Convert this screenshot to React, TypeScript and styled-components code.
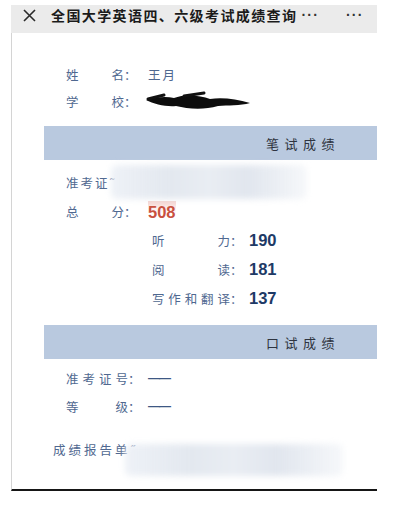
import React from "react";
import styled, { createGlobalStyle } from "styled-components";

const Global = createGlobalStyle`
  html, body { margin: 0; padding: 0; background: #ffffff; }
  body { font-family: "Noto Sans CJK SC", "Noto Sans", sans-serif; }
`;

const Page = styled.div`
  width: 405px;
  height: 510px;
  padding: 5px 0 0 11px;
  box-sizing: border-box;
  background: #fff;
`;

const Header = styled.div`
  width: 366px;
  height: 28px;
  box-sizing: border-box;
  background: #ebebeb;
  display: flex;
  align-items: flex-start;
  padding: 1px 0 0 12px;
`;

const CloseIcon = styled.svg`
  width: 13px;
  height: 13px;
  margin-top: 3px;
  flex: none;
`;

const Title = styled.div`
  margin-left: 15px;
  font-size: 14px;
  line-height: 19px;
  font-weight: 700;
  letter-spacing: 1.4px;
  color: #1b1b1b;
  white-space: nowrap;
  font-family: "Noto Sans CJK SC", sans-serif;
`;

const Dots = styled.span<{ $ml: number }>`
  margin-left: ${(p) => p.$ml}px;
  font-size: 14px;
  line-height: 19px;
  font-weight: 700;
  letter-spacing: 1.2px;
  color: #333;
  font-family: "Liberation Sans", sans-serif;
`;

const Body = styled.div`
  width: 366px;
  height: 458px;
  box-sizing: border-box;
  border-left: 1px solid #d4d4d4;
  border-bottom: 2px solid #161616;
  padding: 31px 0 0 54px;
  display: flex;
  flex-direction: column;
`;

const Row = styled.div<{ $mt?: number; $indent?: number }>`
  display: flex;
  align-items: center;
  height: 20px;
  margin-top: ${(p) => p.$mt ?? 0}px;
  margin-left: ${(p) => p.$indent ?? 0}px;
  font-size: 12.5px;
  color: #4f6890;
  white-space: nowrap;
`;

const Label = styled.span<{ $w: number }>`
  display: inline-flex;
  justify-content: space-between;
  width: ${(p) => p.$w}px;
  flex: none;
`;

const Colon = styled.span<{ $w: number }>`
  width: ${(p) => p.$w}px;
  flex: none;
`;

const Value = styled.span`
  letter-spacing: 2px;
`;

const Dash = styled.span`
  font-family: "Liberation Sans", sans-serif;
  font-weight: 700;
  font-size: 12px;
  letter-spacing: -1px;
  color: #3e5884;
`;

const Num = styled.span<{ $red?: boolean }>`
  font-family: "Liberation Sans", Arial, sans-serif;
  font-weight: 700;
  font-size: 16.5px;
  color: ${(p) => (p.$red ? "#c9513f" : "#1e3a66")};
  ${(p) =>
    p.$red
      ? "background: linear-gradient(to bottom, rgba(232,150,140,0.45) 0%, rgba(232,150,140,0.15) 35%, rgba(255,255,255,0) 60%); padding-top: 2px;"
      : ""}
`;

const Bar = styled.div<{ $mt: number }>`
  margin: ${(p) => p.$mt}px 0 0 -22px;
  width: 333px;
  height: 34px;
  flex: none;
  background: #b9c9df;
  display: flex;
  align-items: center;
  justify-content: flex-end;
  padding-right: 37px;
  box-sizing: border-box;
  font-size: 13px;
  letter-spacing: 5.5px;
  color: #2e3440;
`;

const Blur = styled.span<{ $w: number; $h: number; $ml: number; $mt?: number }>`
  display: inline-block;
  flex: none;
  width: ${(p) => p.$w}px;
  height: ${(p) => p.$h}px;
  margin-left: ${(p) => p.$ml}px;
  margin-top: ${(p) => p.$mt ?? 0}px;
  background:
    linear-gradient(90deg, rgba(236,240,246,0.9) 0%, #e3e8ef 30%, #e9edf3 50%, #e1e6ee 70%, rgba(240,243,247,0.6) 100%);
  filter: blur(3px);
  border-radius: 6px;
`;

const Scribble = styled.svg`
  width: 110px;
  height: 20px;
  margin-left: -4px;
  flex: none;
`;

const ReportRow = styled.div`
  display: flex;
  align-items: flex-start;
  margin: 24px 0 0 -13px;
  font-size: 12.5px;
  color: #4f6890;
  letter-spacing: 3px;
  line-height: 20px;
  white-space: nowrap;
`;

const Chars = ({ text }: { text: string }) => (
  <>
    {text.split("").map((c, i) => (
      <span key={i}>{c}</span>
    ))}
  </>
);

export default function App() {
  return (
    <>
      <Global />
      <Page>
        <Header>
          <CloseIcon viewBox="0 0 13 13">
            <path d="M1 1 L12 12 M12 1 L1 12" stroke="#2a2a2a" strokeWidth="1.6" fill="none" />
          </CloseIcon>
          <Title>全国大学英语四、六级考试成绩查询</Title>
          <Dots $ml={4}>···</Dots>
          <Dots $ml={27}>···</Dots>
        </Header>
        <Body>
          <Row>
            <Label $w={58}><Chars text="姓名" /></Label>
            <Colon $w={24}>：</Colon>
            <Value>王月</Value>
          </Row>
          <Row $mt={7}>
            <Label $w={58}><Chars text="学校" /></Label>
            <Colon $w={24}>：</Colon>
            <Scribble viewBox="0 0 110 20">
              <path
                d="M2 9 C12 6 22 5 30 7 C40 3 56 4 66 8 C78 6 92 8 106 12 C96 15 84 14 74 15 C60 19 44 18 32 15 C22 16 10 13 2 9 Z"
                fill="#0d0d0d"
              />
              <path d="M4 8 L20 4 M40 5 L60 2" stroke="#111" strokeWidth="3" strokeLinecap="round" />
            </Scribble>
          </Row>
          <Bar $mt={15}>笔试成绩</Bar>
          <Row $mt={12}>
            <Value>准考证</Value>
            <span>˜</span>
            <Blur $w={196} $h={34} $ml={-4} />
          </Row>
          <Row $mt={9}>
            <Label $w={58}><Chars text="总分" /></Label>
            <Colon $w={24}>：</Colon>
            <Num $red>508</Num>
          </Row>
          <Row $mt={9} $indent={86}>
            <Label $w={78}><Chars text="听力" /></Label>
            <Colon $w={19}>：</Colon>
            <Num>190</Num>
          </Row>
          <Row $mt={9} $indent={86}>
            <Label $w={78}><Chars text="阅读" /></Label>
            <Colon $w={19}>：</Colon>
            <Num>181</Num>
          </Row>
          <Row $mt={9} $indent={86}>
            <Label $w={78}><Chars text="写作和翻译" /></Label>
            <Colon $w={19}>：</Colon>
            <Num>137</Num>
          </Row>
          <Bar $mt={17}>口试成绩</Bar>
          <Row $mt={9}>
            <Label $w={62}><Chars text="准考证号" /></Label>
            <Colon $w={20}>：</Colon>
            <Dash>——</Dash>
          </Row>
          <Row $mt={8}>
            <Label $w={62}><Chars text="等级" /></Label>
            <Colon $w={20}>：</Colon>
            <Dash>——</Dash>
          </Row>
          <ReportRow>
            <span>成绩报告单</span>
            <span>˝</span>
            <Blur $w={218} $h={32} $ml={-14} $mt={4} />
          </ReportRow>
        </Body>
      </Page>
    </>
  );
}
